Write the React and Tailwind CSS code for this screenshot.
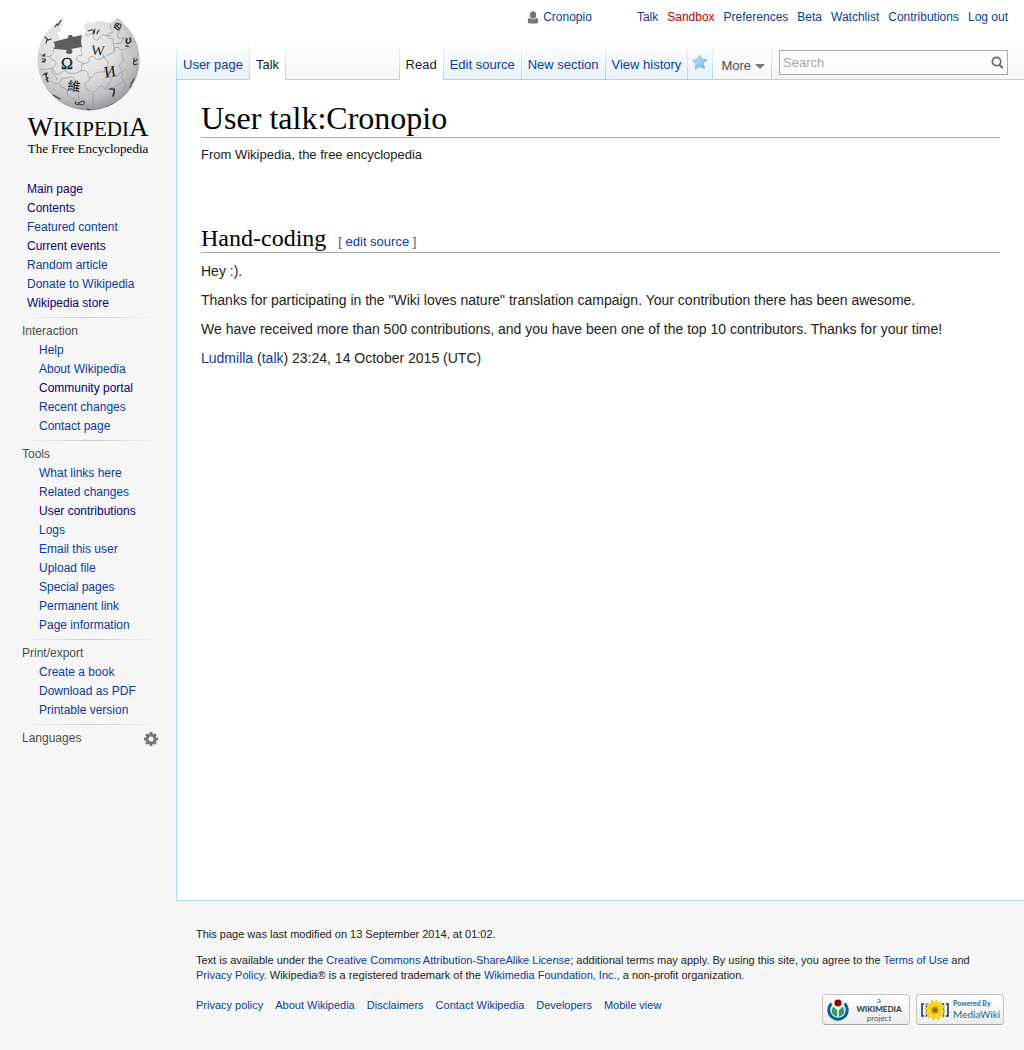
function Link({ children, tone = 'blue' }) {
  const tones = { blue: 'text-[#0a3aa2]', visited: 'text-[#0b0073]', red: 'text-[#ba0000]' };
  return (
    <a href="#" className={`${tones[tone]} hover:underline`}>
      {children}
    </a>
  );
}

function Divider() {
  return <span className="w-px shrink-0 bg-linear-to-b from-transparent to-[#a7d7f9]" />;
}

function Tab({ label, active }) {
  if (active) {
    return (
      <a href="#" aria-current="page" className="flex items-end bg-white px-1.5 pb-[7px] text-[#222]">
        {label}
      </a>
    );
  }
  return (
    <a
      href="#"
      className="flex items-end border-b border-[#a7d7f9] bg-linear-to-b from-white to-[#e8f2f8] px-1.5 pb-1.5 text-[#0a3aa2] hover:underline"
    >
      {label}
    </a>
  );
}

function UserIcon() {
  return (
    <svg viewBox="0 0 12 13" className="mr-1 h-[13px] w-3 fill-[#777]" aria-hidden="true">
      <ellipse cx="6" cy="4" rx="3.200" ry="3.700" />
      <path d="M2.700 6.800C3.500 8 4.700 8.500 6 8.500s2.500-.5 3.300-1.700C10.700 7.300 11.200 8.300 11.200 9.500v1.200c0 1.200-1 1.800-2.200 1.800H3c-1.200 0-2.200-.6-2.200-1.800V9.500c0-1.200.5-2.200 1.900-2.700z" />
    </svg>
  );
}

function StarIcon() {
  return (
    <svg viewBox="0 0 16 16" className="size-4" aria-hidden="true">
      <defs>
        <linearGradient id="star" x1="0" y1="0" x2="1" y2="1">
          <stop offset="0" stopColor="#d3ecfb" />
          <stop offset="1" stopColor="#5fb3ea" />
        </linearGradient>
      </defs>
      <path
        d="M7.500 1l2.300 4.300 5.200.4-3.700 3.700 1.200 5.100-4.700-2-4.500 2.500.7-5.100L.8 6.400l5-.9z"
        fill="url(#star)"
        stroke="#7cbfeb"
        strokeLinejoin="round"
      />
    </svg>
  );
}

function GearIcon() {
  return (
    <svg viewBox="0 0 14 14" className="size-3.5" aria-hidden="true">
      <g fill="#777">
        {[0, 45, 90, 135].map((angle) => (
          <rect key={angle} x="5.500" width="3" height="14" rx=".6" transform={`rotate(${angle} 7 7)`} />
        ))}
        <circle cx="7" cy="7" r="5.300" />
      </g>
      <circle cx="7" cy="7" r="2.500" fill="#f6f6f6" />
    </svg>
  );
}

function Globe() {
  return (
    <svg viewBox="33 14 110 100" className="h-[100px] w-[110px]" aria-hidden="true">
      <defs>
        <radialGradient id="sphere" cx="40%" cy="30%" r="72%">
          <stop offset="0" stopColor="#f2f2f3" />
          <stop offset=".5" stopColor="#dededf" />
          <stop offset=".8" stopColor="#bebec1" />
          <stop offset="1" stopColor="#97979b" />
        </radialGradient>
        <clipPath id="ball">
          <circle cx="88.500" cy="59.500" r="50.500" />
        </clipPath>
      </defs>
      <path
        d="M65 18C48 25 37.500 42 37.500 60c0 28 23 50.500 51 50.500S139.500 88 139.500 60c0-15-6-28-17-37.500L120 19Q115 17 114 21L109 23Q106 22 103 22Q97 20 95 22.500L90 23.500V21L86 22L84 27L86 31L82 36V47L54 50L53 42L60 40L59 36L57 33L61 31L60 28L63 26L61.500 24L64 22L62.500 20z"
        fill="url(#sphere)"
      />
      <path d="M53 42l15-4c-1-3 4-5 5-1l9-2c-1 4-1 8 0 12l-11 2c2 1 2 5-1 5s-5-1-3-4l-13-1c1-3 1-5-1-7z" fill="#5e5e60" />
      <g clipPath="url(#ball)" fill="none" stroke="#96969a" strokeWidth=".7">
        <path d="M39 55c4-2 7 3 11 1s4-4 3-9M50 56c-1 6 6 2 6 7s-6 3-4 9 5 3 5 8M82 47c-3 5 2 6-1 9-4-2-6 3-3 5s4-1 4 3l-1 7M85 35c5 1 7-3 8-1s-1 5 3 6 3-5 7-5 5 1 8 1M111 24c-2 5 2 5 1 9-4-1-6 3-3 5s5-2 4 4l2 9M120 29c0 4-4 5-2 8s6-1 9 2M113 44c5-1 9 0 9-3s4-3 5 0 5 1 8 0M82 64c7-1 8-3 7-5s4-4 6-1 6 1 11-2 9-3 8-6 5-4 6-1 6-1 11-2M40 69c5 2 10-2 13 0s0 6 5 5 4-5 9-2 9 1 14-1 8 2 7 4 4 4 6 0 8-3 15-3 5 4 8 4 2-5 9-6M46 82c5-3 9 4 13 1s0-5 6-5 6-3 9 0M74 78c0 4-5 3-3 7s6 0 7 5l1 10M60 84c0 6 7 2 7 8s5 6 9 8M90 77c0 6-6 3-5 9s8 3 8 9-1 6 1 11M93 92c6-1 4-6 8-6s3 5 8 3 9-4 15-8M108 72c-2 5 5 5 3 9s-5 3-4 8M121 72c4 3-2 5 2 8s3 5 1 10M103 54c0 6 5 5 5 9s-5 4-3 9M122 52c-2 4 3 6 1 9s-5 3-2 9" />
      </g>
      <g fill="#171717" fontFamily="'Liberation Serif', serif" textAnchor="middle">
        <text x="67" y="69" fontSize="16" stroke="#171717" strokeWidth=".3">Ω</text>
        <text x="98" y="55" fontSize="14" transform="rotate(5 98 50)">W</text>
        <text x="110" y="77" fontSize="16" transform="rotate(-8 110 72)">И</text>
        <text x="74" y="91" fontSize="13" fontFamily="'Noto Sans CJK TC', sans-serif" transform="rotate(6 74 86)">維</text>
      </g>
      <g clipPath="url(#ball)" fill="none" stroke="#38383a" strokeWidth="1.100" strokeLinecap="round">
        <path d="M45 37l3 3 3-1M47 40l-1 3M55 27l2-3 1 1 3-5M88 31l3-1c2-1 3 1 2 3M95 29l-1 5M97 33l2-3M98 31l-1 3M42 56h3M42 59c4-1 5 2 1 2M43 56l2-2M42 62h3M43 75l4-2-1 4 2 1-2 2M45 73l3 9M53 95l7 4M76 102c-2 2 1 3 3 2l3 1c3 0 3-4 1-4s-3 2-5 2M107 107l6-3M87 109l4 1M131 84l3-5M130 87l3-2M134 58v3M137 59c0 4-5 0-3 5M134 65l3-1" />
        <path d="M127 39c-2 3 0 5 2 4s2-3 1-5M128 46h-2M110 89h4c1 3 0 5-1 7" strokeWidth="1.700" />
        <path d="M115 25c1-3 4-1 5-1 2 1 1 4-2 6l-4-3zM116 25l3 3M119 24l-4 4" />
      </g>
    </svg>
  );
}

function Badge({ children, label }) {
  return (
    <a
      href="#"
      aria-label={label}
      className="flex h-[31px] w-[88px] items-center gap-1 rounded-sm border border-[#c4c4c4] border-b-[#a8a8a8] bg-linear-to-b from-white to-[#ececec] px-1"
    >
      {children}
    </a>
  );
}

function WikimediaMark() {
  return (
    <svg viewBox="0 0 22 22" className="size-[22px] shrink-0" aria-hidden="true">
      <path d="M4.500 4.500a9.200 9.200 0 1 0 13 0" fill="none" stroke="#069" strokeWidth="3" />
      <path d="M6.500 7.500c-3.500 5-1.500 9 3.700 10.300V11.500zM15.500 7.500c3.500 5 1.500 9-3.700 10.300V11.500z" fill="#396" />
      <circle cx="11" cy="4" r="3.600" fill="#900" />
    </svg>
  );
}

function MediaWikiMark() {
  return (
    <svg viewBox="0 0 28 22" className="h-[22px] w-7 shrink-0" aria-hidden="true">
      <path d="M3 5H1v12h2M25 5h2v12h-2" fill="none" stroke="#0b2a6b" strokeWidth="1.500" />
      <path d="M7 5H5.500v12H7M21 5h1.500v12H21" fill="none" stroke="#0b2a6b" strokeWidth="1.500" strokeDasharray="2 1" />
      {[0, 30, 60, 90, 120, 150].map((angle) => (
        <ellipse
          key={angle}
          cx="14"
          cy="11"
          rx="2.200"
          ry="10.500"
          fill="#f8da1c"
          stroke="#e2b714"
          strokeWidth=".4"
          transform={`rotate(${angle + 10} 14 11)`}
        />
      ))}
      <circle cx="14" cy="11" r="3.500" fill="#c48a18" />
      <circle cx="14" cy="11" r="1.700" fill="#7e5a14" />
    </svg>
  );
}

const mainLinks = [
  ['Main page', 'visited'],
  ['Contents', 'visited'],
  ['Featured content'],
  ['Current events', 'visited'],
  ['Random article'],
  ['Donate to Wikipedia'],
  ['Wikipedia store', 'visited'],
];

const groups = [
  {
    title: 'Interaction',
    items: [['Help'], ['About Wikipedia'], ['Community portal', 'visited'], ['Recent changes'], ['Contact page']],
  },
  {
    title: 'Tools',
    items: [
      ['What links here'],
      ['Related changes'],
      ['User contributions', 'visited'],
      ['Logs'],
      ['Email this user'],
      ['Upload file'],
      ['Special pages'],
      ['Permanent link'],
      ['Page information'],
    ],
  },
  { title: 'Print/export', items: [['Create a book'], ['Download as PDF'], ['Printable version']] },
];

const personalLinks = [
  ['Talk'],
  ['Sandbox', 'red'],
  ['Preferences'],
  ['Beta'],
  ['Watchlist'],
  ['Contributions'],
  ['Log out'],
];

const footerLinks = [
  'Privacy policy',
  'About Wikipedia',
  'Disclaimers',
  'Contact Wikipedia',
  'Developers',
  'Mobile view',
];

function LinkList({ items }) {
  return (
    <ul>
      {items.map(([label, tone]) => (
        <li key={label}>
          <Link tone={tone}>{label}</Link>
        </li>
      ))}
    </ul>
  );
}

function Rule() {
  return <div className="my-1 h-px bg-linear-to-r from-transparent via-[#ccc] to-transparent" />;
}

function Sidebar() {
  return (
    <aside className="w-44 shrink-0 pt-3.5 text-[12px] leading-[19px]">
      <a href="#" className="flex flex-col items-center font-['Liberation_Serif',serif] text-black">
        <Globe />
        <span className="text-[21px] leading-[26px]">
          <span className="text-[27px]">W</span>IKIPEDI<span className="text-[27px]">A</span>
        </span>
        <span className="text-[13px] leading-[13px]">The Free Encyclopedia</span>
      </a>
      <nav aria-label="Site" className="mt-[25px] pr-[18px] pl-[22px]">
        <div className="pl-[5px]">
          <LinkList items={mainLinks} />
        </div>
        {groups.map((group) => (
          <section key={group.title}>
            <Rule />
            <h3 className="text-[#4d4d4d]">{group.title}</h3>
            <div className="pl-[17px]">
              <LinkList items={group.items} />
            </div>
          </section>
        ))}
        <Rule />
        <div className="flex items-center justify-between text-[#4d4d4d]">
          <h3>Languages</h3>
          <button type="button" aria-label="Language settings">
            <GearIcon />
          </button>
        </div>
      </nav>
    </aside>
  );
}

function Header() {
  return (
    <header>
      <nav aria-label="Personal" className="flex h-10 items-start justify-end gap-[9px] pt-2 pr-4 text-[12px] leading-[18px]">
        <span className="mr-9 flex items-center">
          <UserIcon />
          <Link>Cronopio</Link>
        </span>
        {personalLinks.map(([label, tone]) => (
          <Link key={label} tone={tone}>
            {label}
          </Link>
        ))}
      </nav>
      <div className="flex h-10 text-[13px] leading-4 whitespace-nowrap">
        <Divider />
        <Tab label="User page" />
        <Divider />
        <Tab label="Talk" active />
        <Divider />
        <div className="flex-1 border-b border-[#a7d7f9]" />
        <Divider />
        <Tab label="Read" active />
        <Divider />
        <Tab label="Edit source" />
        <Divider />
        <Tab label="New section" />
        <Divider />
        <Tab label="View history" />
        <Divider />
        <button
          type="button"
          aria-label="Watch this page"
          className="flex items-end border-b border-[#a7d7f9] bg-linear-to-b from-white to-[#e8f2f8] px-1 pb-[9px]"
        >
          <StarIcon />
        </button>
        <Divider />
        <button type="button" className="flex items-end border-b border-[#a7d7f9] pr-1.5 pb-[5px] pl-2 text-[#4d4d4d]">
          More
          <svg viewBox="0 0 10 16" className="ml-1 h-4 w-2.5 fill-[#777]" aria-hidden="true">
            <path d="M0 6h10l-5 5z" />
          </svg>
        </button>
        <Divider />
        <div className="border-b border-[#a7d7f9] pt-2.5 pr-4 pl-[7px]">
          <form className="flex h-[25px] w-[229px] items-center border border-[#aaa] bg-white/60 px-[3px]">
            <input
              type="text"
              aria-label="Search"
              placeholder="Search"
              className="min-w-0 flex-1 bg-transparent text-[13px] outline-none placeholder:text-[#a5a5a5]"
            />
            <button type="button" aria-label="Go">
              <svg viewBox="0 0 13 13" className="size-[13px]" fill="none" stroke="#6b6b6b" aria-hidden="true">
                <circle cx="5.500" cy="5.500" r="4.200" strokeWidth="1.700" />
                <path d="M8.300 8.800l3.400 3.200" strokeWidth="2.200" />
              </svg>
            </button>
          </form>
        </div>
      </div>
    </header>
  );
}

function Footer() {
  return (
    <footer className="px-5 pt-[26px] pb-6 text-[11px] leading-[15px]">
      <p>This page was last modified on 13 September 2014, at 01:02.</p>
      <p className="mt-[11px]">
        Text is available under the <Link>Creative Commons Attribution-ShareAlike License</Link>; additional terms may
        apply. By using this site, you agree to the <Link>Terms of Use</Link> and <Link>Privacy Policy</Link>.
        Wikipedia® is a registered trademark of the <Link>Wikimedia Foundation, Inc.</Link>, a non-profit organization.
      </p>
      <div className="mt-[11px] flex items-start justify-between">
        <nav aria-label="Footer" className="flex gap-3 pt-1">
          {footerLinks.map((label) => (
            <Link key={label}>{label}</Link>
          ))}
        </nav>
        <div className="flex gap-1.5 font-[Lato,sans-serif]">
          <Badge label="A Wikimedia project">
            <WikimediaMark />
            <span className="flex flex-1 flex-col text-center text-[8px] leading-[9px] text-[#555]">
              <span>a</span>
              <span className="font-black text-[#444]">WIKIMEDIA</span>
              <span>project</span>
            </span>
          </Badge>
          <Badge label="Powered by MediaWiki">
            <MediaWikiMark />
            <span className="flex flex-col text-[#1a6a9c]">
              <span className="text-[7px] leading-[9px] font-bold">Powered By</span>
              <span className="text-[10px] leading-3">MediaWiki</span>
            </span>
          </Badge>
        </div>
      </div>
    </footer>
  );
}

export default function App() {
  return (
    <div className="flex min-h-screen bg-[linear-gradient(to_bottom,#fff_40px,#f6f6f6_80px)] font-['Liberation_Sans',Arial,sans-serif] text-[#222]">
      <Sidebar />
      <div className="min-w-0 flex-1">
        <Header />
        <main className="min-h-[821px] border-b border-l border-[#a7d7f9] bg-white px-6 pt-5 text-[14px] leading-5">
          <h1 className="border-b border-[#aaa] font-['Liberation_Serif',serif] text-[32px] leading-[37px] text-black">
            User talk:Cronopio
          </h1>
          <p className="mt-[7px] text-[13px]">From Wikipedia, the free encyclopedia</p>
          <div className="mt-[59px] flex items-baseline gap-3 border-b border-[#aaa]">
            <h2 className="font-['Liberation_Serif',serif] text-[24px] leading-7 text-black">Hand-coding</h2>
            <span className="text-[13px] text-[#555]">
              [ <Link>edit source</Link> ]
            </span>
          </div>
          <div className="flex flex-col gap-[9px] pt-2">
            <p>Hey :).</p>
            <p>
              Thanks for participating in the "Wiki loves nature" translation campaign. Your contribution there has been
              awesome.
            </p>
            <p>
              We have received more than 500 contributions, and you have been one of the top 10 contributors. Thanks for
              your time!
            </p>
            <p>
              <Link>Ludmilla</Link> (<Link>talk</Link>) 23:24, 14 October 2015 (UTC)
            </p>
          </div>
        </main>
        <Footer />
      </div>
    </div>
  );
}
